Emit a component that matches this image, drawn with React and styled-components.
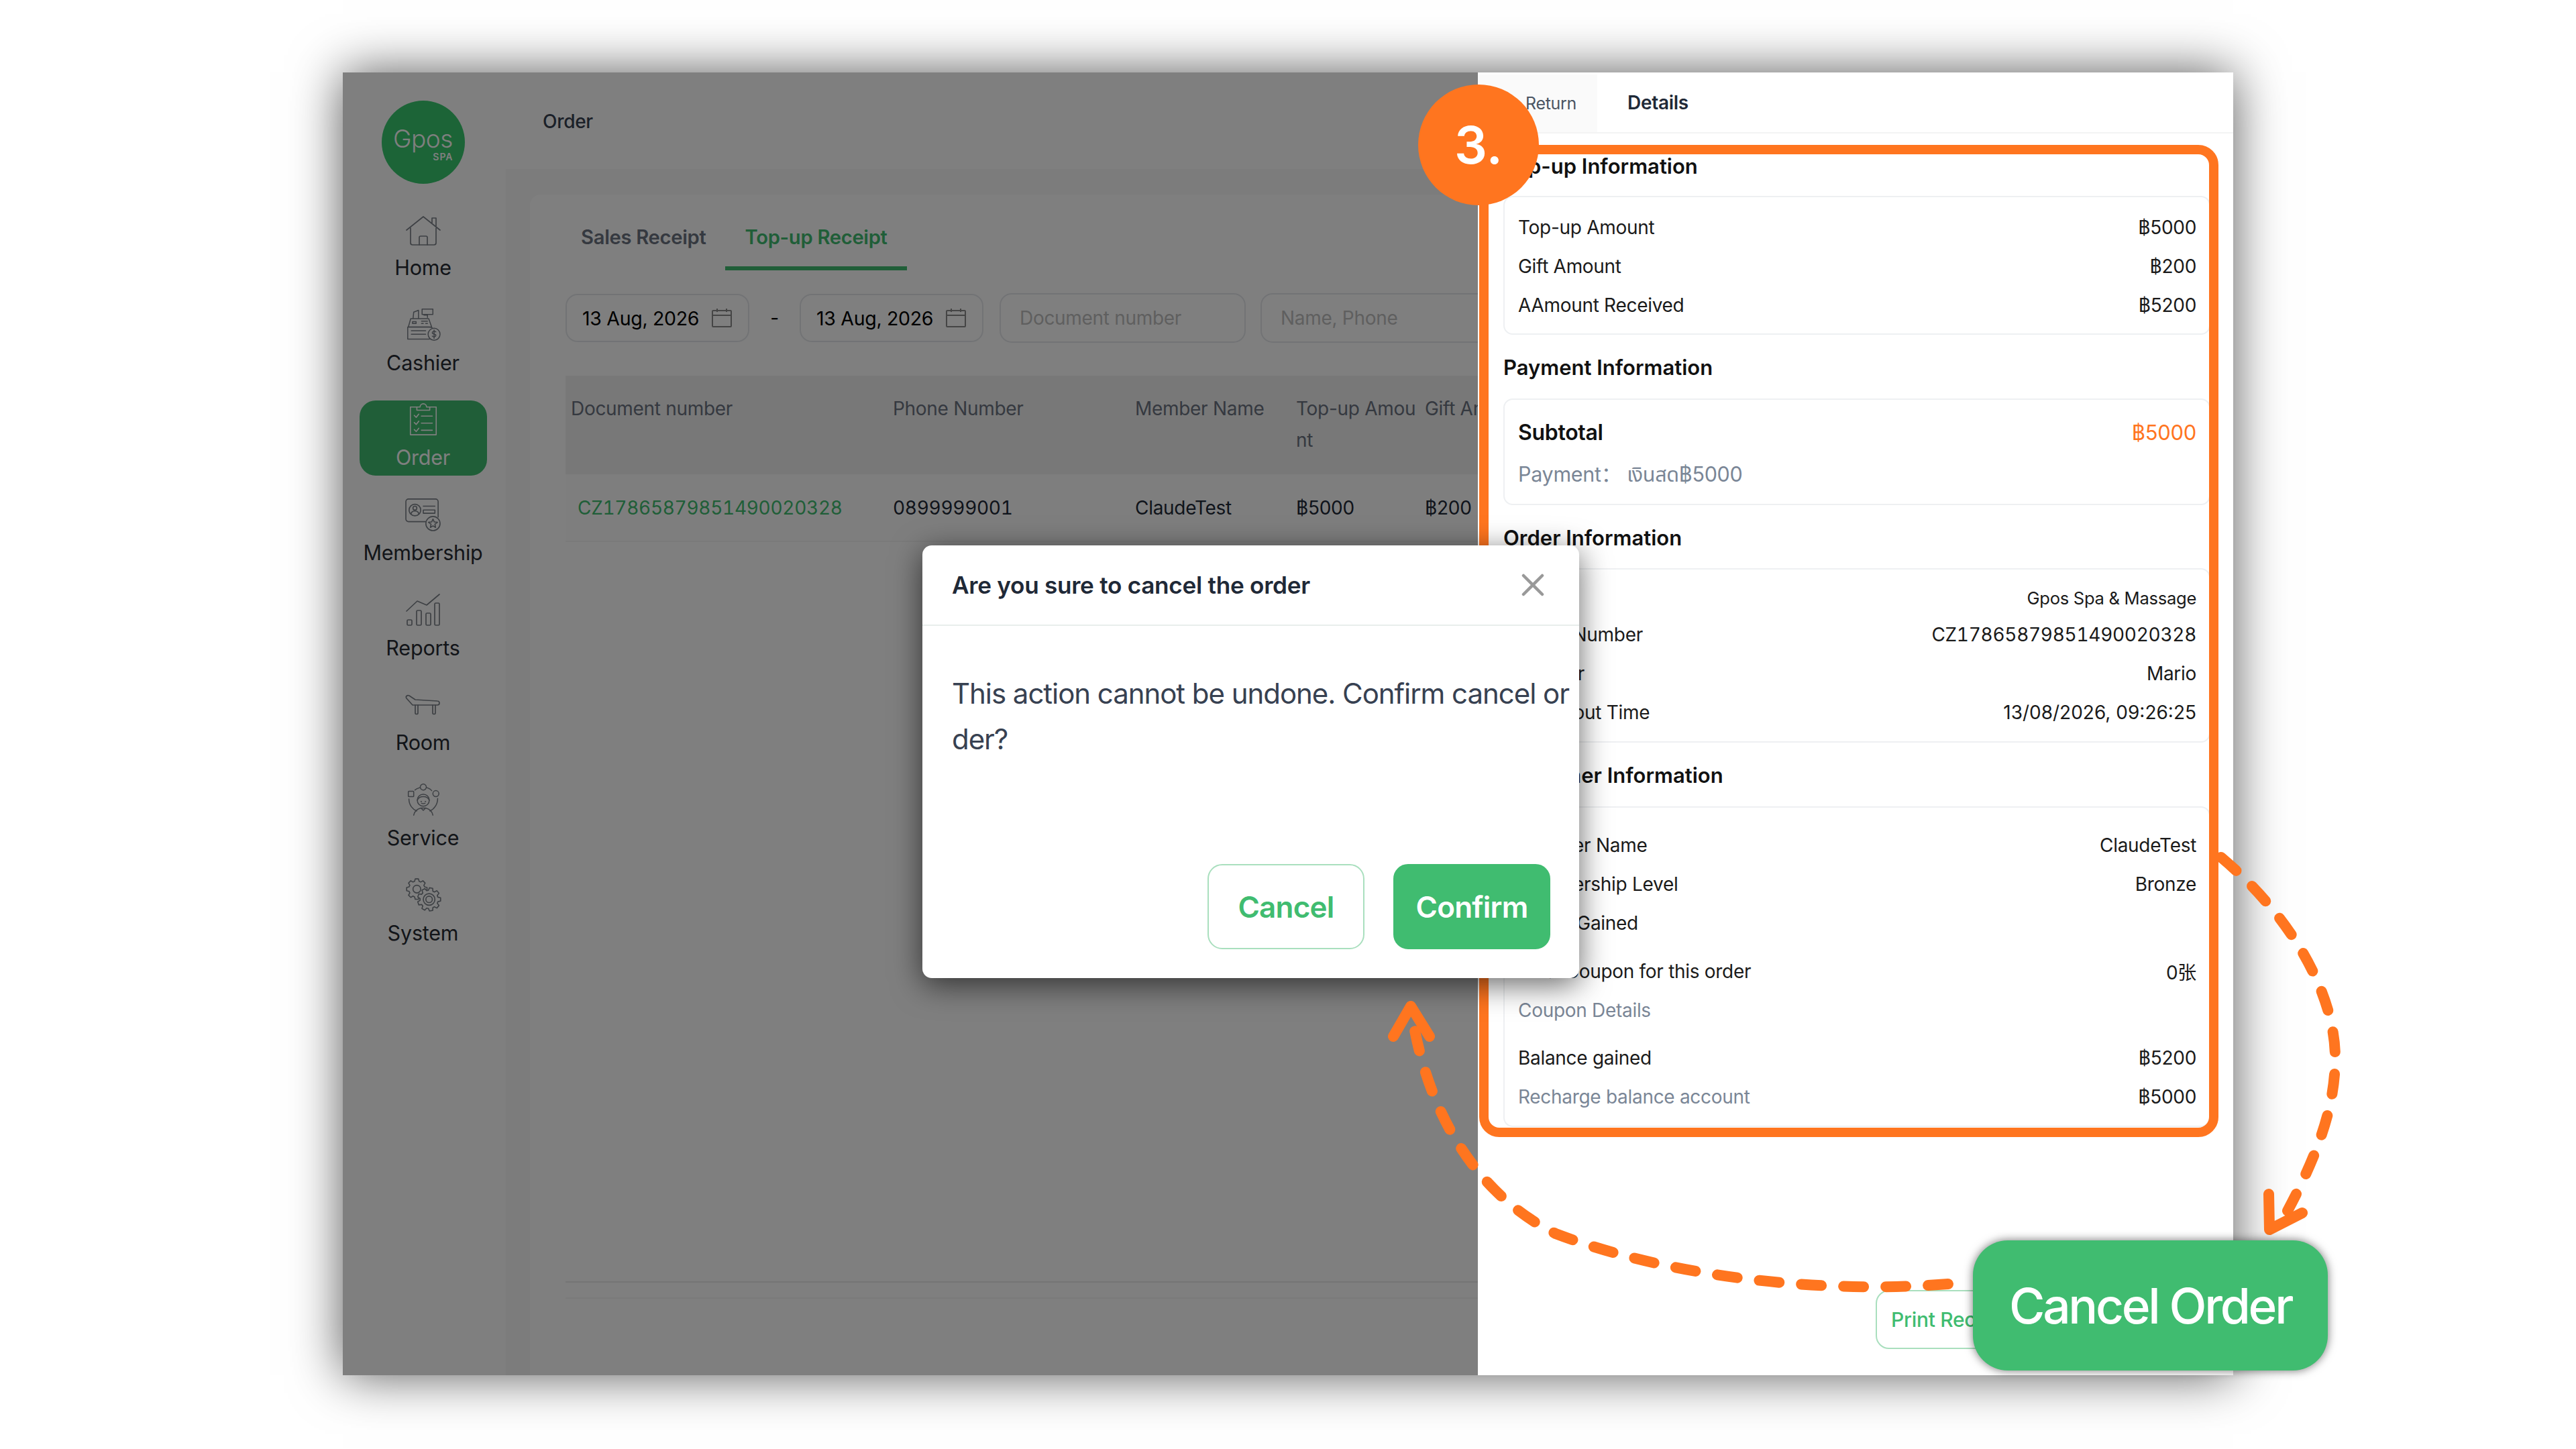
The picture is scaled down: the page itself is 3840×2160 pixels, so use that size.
import styled, { createGlobalStyle } from "styled-components";

const GlobalStyle = createGlobalStyle`
  html, body {
    margin: 0;
    padding: 0;
    background: #fff;
    font-family: Inter, "Noto Sans Thai", "Noto Sans CJK SC", sans-serif;
    overflow: hidden;
  }
  * { box-sizing: border-box; }
`;

const GREEN = "#40bc70";
const ORANGE = "#ff751f";

const Stage = styled.div`
  position: relative;
  width: 3840px;
  height: 2160px;
  padding: 108px 0 0 511px;
  background: #fff;
  overflow: hidden;
`;
const Frame = styled.div`
  position: relative;
  display: flex;
  width: 2818px;
  height: 1942px;
  background: #fff;
  letter-spacing: -0.3px;
  box-shadow: 0 0 72px rgba(0, 0, 0, 0.66);
`;

/* left menu */
const Sidebar = styled.aside`
  flex: none;
  width: 243px;
  padding: 42px 4px 0 0;
  display: flex;
  flex-direction: column;
  align-items: center;
`;
const Logo = styled.div`
  width: 124px;
  height: 124px;
  border-radius: 50%;
  background: #39c86f;
  color: #fff;
  display: flex;
  flex-direction: column;
  align-items: center;
  padding-top: 35px;
  margin-bottom: 40px;
`;
const LogoWord = styled.span`
  font-size: 37px;
  line-height: 44px;
  font-weight: 300;
  letter-spacing: -0.5px;
`;
const LogoSub = styled.span`
  align-self: flex-end;
  margin-right: 17px;
  margin-top: -3px;
  font-size: 14px;
  line-height: 16px;
  font-weight: 600;
  letter-spacing: 1px;
`;
const Nav = styled.nav`
  display: flex;
  flex-direction: column;
  gap: 29.7px;
`;
const NavItem = styled.div`
  width: 190px;
  height: 112px;
  border-radius: 24px;
  display: flex;
  flex-direction: column;
  align-items: center;
  padding-top: 3px;
  background: ${(p) => (p.$active ? GREEN : "transparent")};
  color: ${(p) => (p.$active ? "#fff" : "#262b33")};
  svg {
    display: block;
    width: 58px;
    height: 50px;
    fill: none;
    stroke: ${(p) => (p.$active ? "#fff" : "#7b8088")};
    stroke-width: 1.7;
    stroke-linecap: round;
    stroke-linejoin: round;
  }
`;
const NavLabel = styled.span`
  margin-top: 12px;
  font-size: 30.5px;
  line-height: 40px;
  letter-spacing: -0.2px;
`;

/* page behind the drawer */
const Main = styled.main`
  flex: 1;
  min-width: 0;
  display: flex;
  flex-direction: column;
  overflow: hidden;
`;
const TopBar = styled.header`
  flex: none;
  height: 144px;
  padding: 2px 0 0 55px;
  display: flex;
  align-items: center;
  font-size: 28px;
  font-weight: 500;
  color: #374151;
`;
const Content = styled.div`
  flex: 1;
  min-height: 0;
  padding: 38px 0 0 36px;
  background: #f9f9f9;
`;
const Card = styled.div`
  height: 100%;
  background: #fff;
  border-top-left-radius: 16px;
  display: flex;
  flex-direction: column;
`;
const PageTabs = styled.div`
  display: flex;
  margin-left: 47px;
  padding-top: 44px;
`;
const PageTab = styled.div`
  padding: 0 29px 23px;
  font-size: 29.2px;
  line-height: 40px;
  font-weight: 600;
  color: ${(p) => (p.$active ? GREEN : "#6b7280")};
  border-bottom: 6px solid ${(p) => (p.$active ? GREEN : "transparent")};
`;
const Filters = styled.div`
  display: flex;
  align-items: center;
  margin: 34px 0 0 53px;
`;
const DateBox = styled.div`
  width: 274px;
  height: 72px;
  border: 2px solid #e5e7eb;
  border-radius: 18px;
  display: flex;
  align-items: center;
  justify-content: space-between;
  padding: 0 24px 0 23px;
  font-size: 28.5px;
  color: #000;
  svg {
    width: 30px;
    height: 30px;
    fill: none;
    stroke: #8b8b8b;
    stroke-width: 2;
  }
`;
const Dash = styled.div`
  width: 75px;
  text-align: center;
  font-size: 28px;
  color: #000;
`;
const SearchBox = styled.div`
  flex: none;
  width: 367px;
  height: 74px;
  margin-left: ${(p) => p.$gap}px;
  border: 2px solid #e5e7eb;
  border-radius: 18px;
  display: flex;
  align-items: center;
  padding-left: 28px;
  font-size: 28px;
  color: #bfbfbf;
`;
const Table = styled.div`
  margin: 49px 0 0 53px;
`;
const TableRow = styled.div`
  display: grid;
  grid-template-columns: 480px 361px 240px 192px 300px 1fr;
  height: ${(p) => (p.$head ? 147 : 101)}px;
  align-items: ${(p) => (p.$head ? "start" : "center")};
  padding-top: ${(p) => (p.$head ? 26 : 0)}px;
  background: ${(p) => (p.$head ? "#f0f0f0" : "#fcfcfc")};
  border-bottom: ${(p) => (p.$head ? "none" : "2px solid #f4f4f4")};
`;
const HeadCell = styled.div`
  padding: 0 0 0 8px;
  font-size: 28px;
  line-height: 47px;
  color: #6b7280;
  word-break: break-all;
`;
const BodyCell = styled.div`
  padding: 0 8px;
  font-size: 28px;
  color: #1f2937;
`;
const Digits = styled.span`
  font-feature-settings: "tnum";
`;
const DocLink = styled(Digits)`
  margin-left: 10px;
  color: ${GREEN};
`;
const TableFoot = styled.div`
  margin: auto 0 114px 53px;
  height: 26px;
  border-top: 2px solid #ebebeb;
  border-bottom: 2px solid #f4f4f4;
`;

const Overlay = styled.div`
  position: absolute;
  inset: 0;
  z-index: 1;
  background: rgba(0, 0, 0, 0.5);
`;

/* drawer */
const Drawer = styled.section`
  position: absolute;
  z-index: 2;
  top: 0;
  right: 0;
  bottom: 0;
  width: 1126px;
  background: #fff;
  display: flex;
  flex-direction: column;
`;
const DrawerTabs = styled.div`
  flex: none;
  height: 91px;
  display: flex;
  border-bottom: 2px solid #f3f4f4;
`;
const ReturnTab = styled.div`
  width: 178px;
  margin-top: 3px;
  padding-left: 71px;
  background: #fafafa;
  display: flex;
  align-items: center;
  font-size: 25px;
  color: #4b5563;
`;
const DetailsTab = styled.div`
  padding-left: 45px;
  display: flex;
  align-items: center;
  font-size: 28px;
  font-weight: 600;
  color: #1f2937;
`;
const DrawerBody = styled.div`
  padding: 29px 34px 0 38px;
`;
const SectionTitle = styled.h3`
  margin: ${(p) => (p.$first ? 0 : "29px")} 0 ${(p) => (p.$tight ? 24 : 25.5)}px;
  font-size: 31px;
  line-height: 40px;
  font-weight: 600;
  letter-spacing: 0;
  color: #111;
`;
const InfoCard = styled.div`
  border: 2px solid #eef0f2;
  border-radius: 14px;
  padding: ${(p) => p.$top}px 19px ${(p) => p.$bottom}px 20px;
`;
const Row = styled.div`
  display: flex;
  justify-content: space-between;
  align-items: center;
  height: ${(p) => p.$h || 58}px;
  margin-top: ${(p) => p.$gap || 0}px;
  font-size: ${(p) => p.$size || 28}px;
  font-weight: ${(p) => p.$weight || 400};
  color: ${(p) => p.$color || "#1a1a1a"};
`;
const Amount = styled.span`
  font-weight: 400;
  color: ${(p) => p.$color || "#1a1a1a"};
`;
const TotalAmount = styled(Amount)`
  font-size: 31px;
`;
const TimeValue = styled(Amount)`
  letter-spacing: 0;
`;
const DrawerFoot = styled.div`
  margin-top: auto;
  padding: 0 0 39px 593px;
`;
const PrintButton = styled.div`
  width: 260px;
  height: 88px;
  border: 2px solid #a9dfbe;
  border-radius: 20px;
  display: flex;
  align-items: center;
  padding-left: 21px;
  font-size: 30px;
  font-weight: 500;
  color: ${GREEN};
`;
const Highlight = styled.div`
  position: absolute;
  left: 2px;
  top: 108px;
  width: 1102px;
  height: 1479px;
  border: 14px solid ${ORANGE};
  border-radius: 30px;
`;

/* confirm dialog */
const Modal = styled.div`
  position: absolute;
  z-index: 3;
  left: 864px;
  top: 705px;
  width: 979px;
  height: 645px;
  background: #fff;
  border-radius: 14px;
  box-shadow: 0 10px 46px rgba(0, 0, 0, 0.6);
  display: flex;
  flex-direction: column;
`;
const ModalHead = styled.div`
  flex: none;
  height: 120px;
  padding: 0 45px 0 44px;
  border-bottom: 2px solid #e8eeeb;
  display: flex;
  align-items: center;
  justify-content: space-between;
  font-size: 35.2px;
  font-weight: 600;
  color: #1f2937;
  svg {
    width: 36px;
    height: 36px;
    margin-right: 6px;
    stroke: #999;
    stroke-width: 4.5;
    stroke-linecap: round;
  }
`;
const ModalText = styled.div`
  padding: 67px 4px 0 44px;
  font-size: 42px;
  line-height: 68px;
  letter-spacing: -1.05px;
  color: #374151;
  word-break: break-all;
`;
const ModalFoot = styled.div`
  margin-top: auto;
  padding: 0 43px 43px 0;
  display: flex;
  justify-content: flex-end;
  gap: 43px;
`;
const ModalButton = styled.div`
  width: 234px;
  height: 127px;
  border-radius: 22px;
  border: 2px solid ${(p) => (p.$solid ? GREEN : "#a9dfbe")};
  background: ${(p) => (p.$solid ? GREEN : "#fff")};
  color: ${(p) => (p.$solid ? "#fff" : GREEN)};
  display: flex;
  align-items: center;
  justify-content: center;
  font-size: 44px;
  font-weight: 600;
  letter-spacing: -0.8px;
`;

/* tutorial marks drawn on top of the screenshot */
const Marks = styled.svg`
  position: absolute;
  z-index: 4;
  left: 0;
  top: 0;
  width: 3840px;
  height: 2160px;
  fill: none;
  stroke: ${ORANGE};
  stroke-width: 16;
  stroke-linecap: round;
  stroke-linejoin: round;
`;
const StepBadge = styled.div`
  position: absolute;
  z-index: 5;
  left: 2114px;
  top: 126px;
  width: 180px;
  height: 180px;
  border-radius: 50%;
  background: ${ORANGE};
  color: #fff;
  display: flex;
  align-items: center;
  justify-content: center;
  font-size: 77px;
  font-weight: 600;
`;
const BigCancel = styled.div`
  position: absolute;
  z-index: 5;
  left: 2941px;
  top: 1849px;
  width: 529px;
  height: 194px;
  border-radius: 52px;
  background: ${GREEN};
  color: #fff;
  box-shadow: 0 0 14px rgba(0, 0, 0, 0.55);
  display: flex;
  align-items: center;
  justify-content: center;
  font-size: 73px;
  font-weight: 500;
  letter-spacing: -3.3px;
`;

const gearPath = (cx, cy, r, teeth) => {
  const pts = [];
  const step = (Math.PI * 2) / teeth;
  for (let i = 0; i < teeth; i++) {
    const a = i * step;
    [
      [r * 0.78, -0.36],
      [r, -0.2],
      [r, 0.2],
      [r * 0.78, 0.36],
    ].forEach(([rad, off]) => {
      const t = a + off * step;
      pts.push(`${(cx + rad * Math.cos(t)).toFixed(1)} ${(cy + rad * Math.sin(t)).toFixed(1)}`);
    });
  }
  return "M" + pts.join("L") + "Z";
};

const HomeIcon = () => (
  <svg viewBox="0 -3 58 50">
    <path d="M4 23 29 3l25 20M10 20v22a3 3 0 0 0 3 3h32a3 3 0 0 0 3-3V20" />
    <path d="M23 45V34a2 2 0 0 1 2-2h8a2 2 0 0 1 2 2v11M42 12V5h6v12" />
  </svg>
);
const CashierIcon = () => (
  <svg viewBox="0 0 58 56">
    <path d="M27 2h18v9H27zM36 11v5M12 17l1-10 8-3v13M8 18h30l5 14H4z" />
    <path d="M11 23h6v3h-6zM26 22h10M26 26h3M33 26h3M30 12h6" />
    <path d="M3 32h36a8 8 0 0 1 0 20H3zM9 38h24M9 44h24" />
    <circle cx="47" cy="44" r="10" fill="#fff" />
    <path d="M50 40c-2-2-6-1-6 1.500 0 3 6 1.500 6 4.500 0 2.500-4 3-6 1M47 37v14" />
  </svg>
);
const OrderIcon = () => (
  <svg viewBox="0 0 58 52">
    <path d="M19 7H9v43h40V7H39" />
    <path d="M19 12h20V7h-5a5 5 0 0 0-10 0h-5z" />
    <path d="m15 20 3 3 4-5M26 21h17M15 31l3 3 4-5M26 32h17M15 42l3 3 4-5M26 43h17" />
  </svg>
);
const MemberIcon = () => (
  <svg viewBox="0 0 58 52">
    <path d="M33 37H6a4 4 0 0 1-4-4V6a4 4 0 0 1 4-4h42a4 4 0 0 1 4 4v24" />
    <circle cx="16" cy="19" r="9" />
    <circle cx="16" cy="16" r="3" />
    <path d="M10 25c1-6 11-6 12 0M29 13h18M29 19h18v5H29z" />
    <circle cx="44" cy="40" r="11" />
    <path d="m44 33 2 4.500 5 .5-4 3 1 5-4-2.500-4 2.500 1-5-4-3 5-.5z" />
  </svg>
);
const ReportIcon = () => (
  <svg viewBox="0 0 58 50">
    <path d="m4 27 16-15 14 6L53 2" />
    <rect x="5" y="40" width="7" height="8" rx="1.500" />
    <rect x="19" y="26" width="7" height="22" rx="1.500" />
    <rect x="33" y="30" width="7" height="18" rx="1.500" />
    <rect x="46" y="15" width="7" height="33" rx="1.500" />
  </svg>
);
const RoomIcon = () => (
  <svg viewBox="0 -3 58 50">
    <path d="M4 13c-2-3 1-5 4-4l9 6 33 2c4 0 4 6 0 6H13z" />
    <path d="M17 23v12c0 2 4 2 4 0V23M43 23v12c0 2 4 2 4 0V23" />
  </svg>
);
const ServiceIcon = () => (
  <svg viewBox="0 0 58 56">
    <circle cx="29" cy="7" r="5" strokeDasharray="2 1" />
    <rect x="4" y="14" width="9" height="9" rx="1" />
    <circle cx="50" cy="18" r="5" />
    <path d="M15 12c2-2 5-3 8-4M35 8c3 1 6 2 8 5M5 27c0 10 6 17 13 20M53 26c0 10-6 18-13 21" />
    <circle cx="29" cy="29" r="10" />
    <path d="M19 29c2-5 6-6 10-6s8 1 10 6M25 31h1M32 31h1M26 34c2 1 4 1 6 0" />
    <path d="M13 54c1-6 5-10 12-12h8c7 2 11 6 12 12M25 42l4 4 4-4" />
  </svg>
);
const SystemIcon = () => (
  <svg viewBox="0 0 58 52">
    <path d={gearPath(19, 17, 16, 8)} />
    <circle cx="19" cy="17" r="6" />
    <path d={gearPath(38, 33, 18, 9)} fill="#fff" />
    <circle cx="38" cy="33" r="9" />
    <circle cx="38" cy="33" r="5" />
  </svg>
);
const CalendarIcon = () => (
  <svg viewBox="0 0 30 30">
    <rect x="1" y="4" width="28" height="24" rx="1" />
    <path d="M1 11h28M8 1v5M22 1v5" />
  </svg>
);

const navItems = [
  ["Home", HomeIcon],
  ["Cashier", CashierIcon],
  ["Order", OrderIcon],
  ["Membership", MemberIcon],
  ["Reports", ReportIcon],
  ["Room", RoomIcon],
  ["Service", ServiceIcon],
  ["System", SystemIcon],
];

const App = () => {
  return (
    <>
      <GlobalStyle />
      <Stage>
        <Frame>
          <Sidebar>
            <Logo>
              <LogoWord>Gpos</LogoWord>
              <LogoSub>SPA</LogoSub>
            </Logo>
            <Nav>
              {navItems.map(([label, Icon]) => (
                <NavItem key={label} $active={label === "Order"}>
                  <Icon />
                  <NavLabel>{label}</NavLabel>
                </NavItem>
              ))}
            </Nav>
          </Sidebar>

          <Main>
            <TopBar>Order</TopBar>
            <Content>
              <Card>
                <PageTabs>
                  <PageTab>Sales Receipt</PageTab>
                  <PageTab $active>Top-up Receipt</PageTab>
                </PageTabs>
                <Filters>
                  <DateBox>
                    13 Aug, 2026
                    <CalendarIcon />
                  </DateBox>
                  <Dash>-</Dash>
                  <DateBox>
                    13 Aug, 2026
                    <CalendarIcon />
                  </DateBox>
                  <SearchBox $gap={24}>Document number</SearchBox>
                  <SearchBox $gap={22}>Name, Phone</SearchBox>
                </Filters>
                <Table>
                  <TableRow $head>
                    <HeadCell>Document number</HeadCell>
                    <HeadCell>Phone Number</HeadCell>
                    <HeadCell>Member Name</HeadCell>
                    <HeadCell>Top-up Amount</HeadCell>
                    <HeadCell>Gift Amount</HeadCell>
                  </TableRow>
                  <TableRow>
                    <BodyCell>
                      <DocLink>CZ17865879851490020328</DocLink>
                    </BodyCell>
                    <BodyCell>
                      <Digits>0899999001</Digits>
                    </BodyCell>
                    <BodyCell>ClaudeTest</BodyCell>
                    <BodyCell>฿5000</BodyCell>
                    <BodyCell>฿200</BodyCell>
                  </TableRow>
                </Table>
                <TableFoot />
              </Card>
            </Content>
          </Main>

          <Overlay />

          <Drawer>
            <DrawerTabs>
              <ReturnTab>Return</ReturnTab>
              <DetailsTab>Details</DetailsTab>
            </DrawerTabs>
            <DrawerBody>
              <SectionTitle $first $tight>Top-up Information</SectionTitle>
              <InfoCard $top={16} $bottom={13}>
                <Row>
                  <span>Top-up Amount</span>
                  <Amount>฿5000</Amount>
                </Row>
                <Row>
                  <span>Gift Amount</span>
                  <Amount>฿200</Amount>
                </Row>
                <Row>
                  <span>AAmount Received</span>
                  <Amount>฿5200</Amount>
                </Row>
              </InfoCard>

              <SectionTitle>Payment Information</SectionTitle>
              <InfoCard $top={15} $bottom={14}>
                <Row $h={68} $size={32} $weight={600} $color="#111">
                  <span>Subtotal</span>
                  <TotalAmount $color={ORANGE}>฿5000</TotalAmount>
                </Row>
                <Row $size={30.5} $color="#7a8696">
                  <span>Payment： เงินสด฿5000</span>
                </Row>
              </InfoCard>

              <SectionTitle>Order Information</SectionTitle>
              <InfoCard $top={16} $bottom={14}>
                <Row $h={52} $size={25.6}>
                  <span>Store</span>
                  <Amount>Gpos Spa &amp; Massage</Amount>
                </Row>
                <Row>
                  <span>Order Number</span>
                  <Amount>
                    <Digits>CZ17865879851490020328</Digits>
                  </Amount>
                </Row>
                <Row>
                  <span>Cashier</span>
                  <Amount>Mario</Amount>
                </Row>
                <Row>
                  <span>Checkout Time</span>
                  <TimeValue>13/08/2026, 09:26:25</TimeValue>
                </Row>
              </InfoCard>

              <SectionTitle>Customer Information</SectionTitle>
              <InfoCard $top={27} $bottom={14}>
                <Row>
                  <span>Member Name</span>
                  <Amount>ClaudeTest</Amount>
                </Row>
                <Row>
                  <span>Membership Level</span>
                  <Amount>Bronze</Amount>
                </Row>
                <Row>
                  <span>Points Gained</span>
                </Row>
                <Row $gap={14}>
                  <span>Total Coupon for this order</span>
                  <Amount>0张</Amount>
                </Row>
                <Row $color="#7a8696">
                  <span>Coupon Details</span>
                </Row>
                <Row $gap={13}>
                  <span>Balance gained</span>
                  <Amount>฿5200</Amount>
                </Row>
                <Row $color="#7a8696">
                  <span>Recharge balance account</span>
                  <Amount>฿5000</Amount>
                </Row>
              </InfoCard>
            </DrawerBody>
            <DrawerFoot>
              <PrintButton>Print Receipt</PrintButton>
            </DrawerFoot>
            <Highlight />
          </Drawer>

          <Modal>
            <ModalHead>
              Are you sure to cancel the order
              <svg viewBox="0 0 36 36">
                <path d="M4 4l28 28M32 4 4 32" />
              </svg>
            </ModalHead>
            <ModalText>This action cannot be undone. Confirm cancel order?</ModalText>
            <ModalFoot>
              <ModalButton>Cancel</ModalButton>
              <ModalButton $solid>Confirm</ModalButton>
            </ModalFoot>
          </Modal>
        </Frame>

        <Marks viewBox="0 0 3840 2160">
          <path
            strokeDasharray="30 33"
            d="M3311 1278C3420 1370 3481 1485 3481 1577C3481 1650 3455 1720 3410 1805"
          />
          <path d="M3382 1780 3383 1833 3432 1808" />
          <path
            strokeDasharray="30 33"
            d="M2904 1914C2700 1930 2480 1900 2319 1839C2200 1780 2130 1660 2106 1520"
          />
          <path d="M2077 1545 2103 1500 2131 1545" />
        </Marks>
        <StepBadge>3.</StepBadge>
        <BigCancel>Cancel Order</BigCancel>
      </Stage>
    </>
  );
};

export default App;
